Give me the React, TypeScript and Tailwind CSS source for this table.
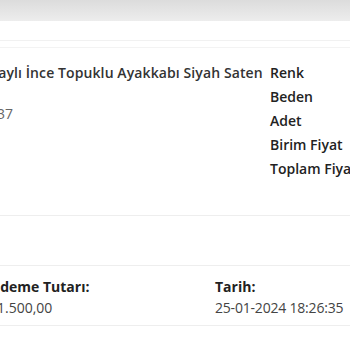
import React from 'react';

const specs = ['Renk', 'Beden', 'Adet', 'Birim Fiyat', 'Toplam Fiyat'];

export default function App() {
  return (
    <div
      className="w-[350px] h-[350px] overflow-hidden bg-white text-[14px] text-[#222]"
      style={{ fontFamily: '"Open Sans", "Liberation Sans", sans-serif' }}
    >
      <div className="h-[21px] bg-gradient-to-b from-[#dcdcdc] to-[#ededed]" />
      <div className="h-[20px] border-b border-[#f1f1f1]" />
      <div className="h-[7px] border-b border-[#f3f3f3]" />

      {/* product row */}
      <div className="h-[168px] border-b border-[#eeeeee] flex">
        <div className="w-[268px] shrink-0 overflow-hidden">
          <div className="-ml-[26px] pt-[14px] whitespace-nowrap">
            <div className="font-semibold text-[#333] leading-[21px] tracking-[0.1px]">
              Detaylı İnce Topuklu Ayakkabı Siyah Saten
            </div>
            <div className="mt-[20px] ml-[23px] text-[#666] leading-[21px]">37</div>
          </div>
        </div>
        <div className="pt-[14px] pl-[2px] flex flex-col gap-[3px] whitespace-nowrap font-semibold">
          {specs.map((s) => (
            <div key={s} className="leading-[21px]">{s}</div>
          ))}
        </div>
      </div>

      <div className="h-[50px] border-b border-[#eeeeee]" />

      {/* payment row */}
      <div className="h-[60px] border-b border-[#eeeeee] flex pt-[11px]">
        <div className="w-[215px] shrink-0 overflow-hidden">
          <div className="-ml-[11px] whitespace-nowrap">
            <div className="font-bold leading-[20px]">Ödeme Tutarı:</div>
            <div className="mt-[1px] text-[#444] leading-[20px]">₺1.500,00</div>
          </div>
        </div>
        <div className="whitespace-nowrap">
          <div className="font-bold leading-[20px]">Tarih:</div>
          <div className="mt-[1px] text-[#444] leading-[20px] tracking-[-0.2px]">25-01-2024 18:26:35</div>
        </div>
      </div>
    </div>
  );
}
